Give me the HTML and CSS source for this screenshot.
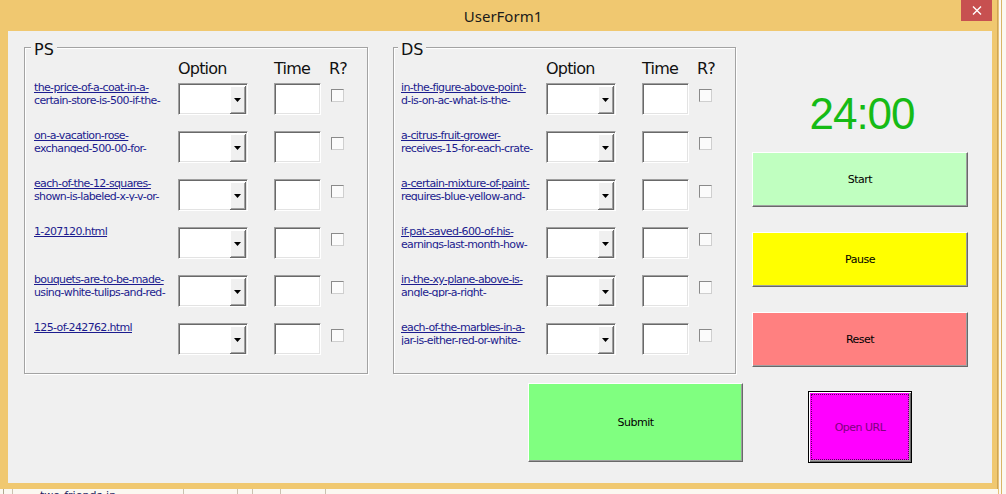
FILE: index.html
```html
<!DOCTYPE html>
<html>
<head>
<meta charset="utf-8">
<title>UserForm1</title>
<link rel="stylesheet" href="styles.css">
</head>
<body>
<div class="screen">
  <div class="main">
    <div class="window">
      <div class="titlebar">
        <span class="tb-side"></span>
        <span class="title">UserForm1</span>
        <span class="tb-side tb-right">
          <span class="close"><svg width="10" height="9" viewBox="0 0 10 9"><path d="M1 0.5 L9 8.5 M9 0.5 L1 8.5" stroke="#fff" stroke-width="1.4" fill="none"/></svg></span>
        </span>
      </div>
      <div class="client">
        <div class="toprow">
          <div class="frame ps">
            <div class="legend">PS</div>
            <div class="head"><span class="hlink"></span><span class="hopt">Option</span><span class="htime">Time</span><span class="hr">R?</span></div>
            <div class="rows">
              <div class="row"><a class="link"><span>the-price-of-a-coat-in-a-</span><span>certain-store-is-500-if-the-</span></a><div class="combo"><div class="drop"><svg width="7" height="4" viewBox="0 0 7 4"><path d="M0 0 H7 L3.5 4 Z" fill="#000"/></svg></div></div><div class="textbox"></div><div class="check"></div></div>
              <div class="row"><a class="link"><span>on-a-vacation-rose-</span><span>exchanged-500-00-for-</span></a><div class="combo"><div class="drop"><svg width="7" height="4" viewBox="0 0 7 4"><path d="M0 0 H7 L3.5 4 Z" fill="#000"/></svg></div></div><div class="textbox"></div><div class="check"></div></div>
              <div class="row"><a class="link"><span>each-of-the-12-squares-</span><span>shown-is-labeled-x-y-v-or-</span></a><div class="combo"><div class="drop"><svg width="7" height="4" viewBox="0 0 7 4"><path d="M0 0 H7 L3.5 4 Z" fill="#000"/></svg></div></div><div class="textbox"></div><div class="check"></div></div>
              <div class="row"><a class="link"><span>1-207120.html</span></a><div class="combo"><div class="drop"><svg width="7" height="4" viewBox="0 0 7 4"><path d="M0 0 H7 L3.5 4 Z" fill="#000"/></svg></div></div><div class="textbox"></div><div class="check"></div></div>
              <div class="row"><a class="link"><span>bouquets-are-to-be-made-</span><span>using-white-tulips-and-red-</span></a><div class="combo"><div class="drop"><svg width="7" height="4" viewBox="0 0 7 4"><path d="M0 0 H7 L3.5 4 Z" fill="#000"/></svg></div></div><div class="textbox"></div><div class="check"></div></div>
              <div class="row"><a class="link"><span>125-of-242762.html</span></a><div class="combo"><div class="drop"><svg width="7" height="4" viewBox="0 0 7 4"><path d="M0 0 H7 L3.5 4 Z" fill="#000"/></svg></div></div><div class="textbox"></div><div class="check"></div></div>
            </div>
          </div>
          <div class="frame ds">
            <div class="legend">DS</div>
            <div class="head"><span class="hlink"></span><span class="hopt">Option</span><span class="htime">Time</span><span class="hr">R?</span></div>
            <div class="rows">
              <div class="row"><a class="link"><span>in-the-figure-above-point-</span><span>d-is-on-ac-what-is-the-</span></a><div class="combo"><div class="drop"><svg width="7" height="4" viewBox="0 0 7 4"><path d="M0 0 H7 L3.5 4 Z" fill="#000"/></svg></div></div><div class="textbox"></div><div class="check"></div></div>
              <div class="row"><a class="link"><span>a-citrus-fruit-grower-</span><span>receives-15-for-each-crate-</span></a><div class="combo"><div class="drop"><svg width="7" height="4" viewBox="0 0 7 4"><path d="M0 0 H7 L3.5 4 Z" fill="#000"/></svg></div></div><div class="textbox"></div><div class="check"></div></div>
              <div class="row"><a class="link"><span>a-certain-mixture-of-paint-</span><span>requires-blue-yellow-and-</span></a><div class="combo"><div class="drop"><svg width="7" height="4" viewBox="0 0 7 4"><path d="M0 0 H7 L3.5 4 Z" fill="#000"/></svg></div></div><div class="textbox"></div><div class="check"></div></div>
              <div class="row"><a class="link"><span>if-pat-saved-600-of-his-</span><span>earnings-last-month-how-</span></a><div class="combo"><div class="drop"><svg width="7" height="4" viewBox="0 0 7 4"><path d="M0 0 H7 L3.5 4 Z" fill="#000"/></svg></div></div><div class="textbox"></div><div class="check"></div></div>
              <div class="row"><a class="link"><span>in-the-xy-plane-above-is-</span><span>angle-qpr-a-right-</span></a><div class="combo"><div class="drop"><svg width="7" height="4" viewBox="0 0 7 4"><path d="M0 0 H7 L3.5 4 Z" fill="#000"/></svg></div></div><div class="textbox"></div><div class="check"></div></div>
              <div class="row"><a class="link"><span>each-of-the-marbles-in-a-</span><span>jar-is-either-red-or-white-</span></a><div class="combo"><div class="drop"><svg width="7" height="4" viewBox="0 0 7 4"><path d="M0 0 H7 L3.5 4 Z" fill="#000"/></svg></div></div><div class="textbox"></div><div class="check"></div></div>
            </div>
          </div>
          <div class="rightcol">
            <div class="timer">24:00</div>
            <div class="btn start">Start</div>
            <div class="btn pause">Pause</div>
            <div class="btn reset">Reset</div>
          </div>
        </div>
        <div class="bottomrow">
          <div class="btn submit">Submit</div>
          <div class="openurl"><div class="focus">Open URL</div></div>
        </div>
      </div>
    </div>
    <div class="sheetrow">
      <span class="cell c1"></span><span class="cell c2"></span><span class="cell c3">two-friends-in-</span><span class="cell c4"></span><span class="cell c5"></span><span class="cell c6"></span><span class="cell c7"></span>
    </div>
  </div>
  <div class="side"></div>
</div>
</body>
</html>
```

FILE: styles.css
```css
* { box-sizing: border-box; }
html, body { margin: 0; padding: 0; }
body {
  width: 1006px;
  height: 494px;
  overflow: hidden;
  background: #fbf8f1;
  font-family: "DejaVu Sans", sans-serif;
}
.screen { display: flex; height: 494px; }
.main { width: 998px; display: flex; flex-direction: column; }
.side {
  width: 8px;
  height: 494px;
  background: linear-gradient(to right, #e6c27a 0, #e6c27a 1px, #fbf8f1 1px, #fbf8f1 3px, #d9b567 3px, #d9b567 4px, #fbf8f1 4px);
}

.window {
  height: 489px;
  background: #f0c870;
  padding: 0 5px 6px 8px;
  border-right: 1px solid #d0a653;
  display: flex;
  flex-direction: column;
}
.titlebar {
  height: 31px;
  display: grid;
  grid-template-columns: 1fr auto 1fr;
  align-items: center;
}
.title {
  font-family: "Noto Sans", sans-serif;
  font-size: 15px;
  color: #1b1b1b;
  padding-left: 6px;
  line-height: 20px;
}
.tb-right { display: flex; justify-content: flex-end; align-self: start; }
.close {
  width: 31px;
  height: 21px;
  background: #c75050;
  display: flex;
  align-items: center;
  justify-content: center;
}

.client {
  height: 452px;
  background: #f0f0f0;
  padding: 16px 0 0 16px;
  display: flex;
  flex-direction: column;
}
.toprow { display: flex; align-items: flex-start; }

.frame {
  height: 327px;
  border: 1px solid #a3a3a3;
  box-shadow: 1px 1px 0 #fff, inset 1px 1px 0 #fff;
  --lw: 144px;
  padding: 0 0 0 9px;
}
.frame.ps { width: 344px; margin-right: 25px; }
.frame.ds { width: 343px; margin-right: 16px; --lw: 145px; padding-left: 7px; }

.legend {
  margin: -7px 0 0 -3px;
  padding: 0 3px;
  width: max-content;
  background: #f0f0f0;
  font-size: 16px;
  line-height: 18px;
  color: #111;
}
.head {
  display: flex;
  margin-top: 1px;
  font-size: 16px;
  line-height: 18px;
  letter-spacing: -0.8px;
  color: #111;
}
.hlink { width: var(--lw); }
.hopt { width: 70px; margin-right: 26px; }
.htime { width: 47px; margin-right: 8px; }

.rows { margin-top: 5px; display: flex; flex-direction: column; gap: 16px; }
.row { display: flex; align-items: flex-start; height: 32px; }
.link {
  width: var(--lw);
  height: 24px;
  margin-top: -2px;
  overflow: hidden;
  display: flex;
  flex-direction: column;
  font-size: 11px;
  line-height: 13px;
  letter-spacing: -0.65px;
  color: #1c1c8e;
  text-decoration: underline;
  white-space: nowrap;
}
.link span { display: block; }

.combo {
  width: 70px;
  height: 32px;
  margin-right: 26px;
  background: #fff;
  border: 1px solid;
  border-color: #a0a0a0 #fff #fff #a0a0a0;
  box-shadow: inset 1px 1px 0 #696969, inset -1px -1px 0 #e3e3e3;
  display: flex;
  justify-content: flex-end;
  padding: 1px 1px 1px 2px;
}
.drop {
  width: 16px;
  height: 28px;
  margin-top: 1px;
  background: #f0f0f0;
  border-right: 1px solid #696969;
  border-bottom: 1px solid #696969;
  box-shadow: inset 1px 1px 0 #fff, inset -1px -1px 0 #a0a0a0;
  display: flex;
  align-items: center;
  justify-content: center;
}
.drop svg { display: block; margin-top: 1px; }
.textbox {
  width: 47px;
  height: 32px;
  margin-right: 10px;
  background: #fff;
  border: 1px solid;
  border-color: #a0a0a0 #fff #fff #a0a0a0;
  box-shadow: inset 1px 1px 0 #696969, inset -1px -1px 0 #e3e3e3;
}
.check {
  width: 13px;
  height: 13px;
  margin-top: 6px;
  background: #fbfbfb;
  border: 1px solid;
  border-color: #8a8a8a #cfcfcf #cfcfcf #8a8a8a;
}

.rightcol { width: 216px; display: flex; flex-direction: column; }
.timer {
  margin-top: 43px;
  padding-left: 4px;
  height: 48px;
  font-family: "Liberation Sans", sans-serif;
  font-size: 44px;
  line-height: 48px;
  letter-spacing: -1px;
  color: #16bb16;
  text-align: center;
}
.btn {
  height: 55px;
  display: flex;
  align-items: center;
  justify-content: center;
  font-size: 11px;
  letter-spacing: -0.5px;
  color: #000;
  border: 1px solid;
  border-color: #fff #696969 #696969 #fff;
  box-shadow: inset -1px -1px 0 #a0a0a0;
}
.start { margin-top: 14px; background: #c0ffc0; }
.pause { margin-top: 25px; background: #ffff00; }
.reset { margin-top: 25px; background: #ff8080; }

.bottomrow { display: flex; align-items: flex-start; }
.submit {
  width: 215px;
  height: 79px;
  margin: 9px 0 0 504px;
  background: #80ff80;
}
.openurl {
  width: 104px;
  height: 72px;
  margin: 17px 0 0 65px;
  background: #ff00ff;
  border: 1px solid #000;
  box-shadow: inset 1px 1px 0 #fff, inset -1px -1px 0 #696969, inset -2px -2px 0 #a0a0a0;
  padding: 2px;
}
.focus {
  height: 100%;
  border: 1px dotted #5a005a;
  display: flex;
  align-items: center;
  justify-content: center;
  font-size: 11px;
  letter-spacing: -0.5px;
  color: #800080;
}

.sheetrow {
  height: 5px;
  overflow: hidden;
  display: flex;
  background: #fbf8f1;
}
.cell {
  height: 5px;
  border-right: 1px solid #c9c2b0;
  font-size: 11px;
  line-height: 12px;
  color: #1c1c5e;
  white-space: nowrap;
  overflow: hidden;
}
.c1 { width: 4px; border-color: #b0a890; }
.c2 { width: 9px; }
.c3 { width: 171px; padding-left: 27px; padding-top: 1px; }
.c4 { width: 54px; }
.c5 { width: 15px; }
.c6 { width: 28px; }
.c7 { width: 45px; }
```
